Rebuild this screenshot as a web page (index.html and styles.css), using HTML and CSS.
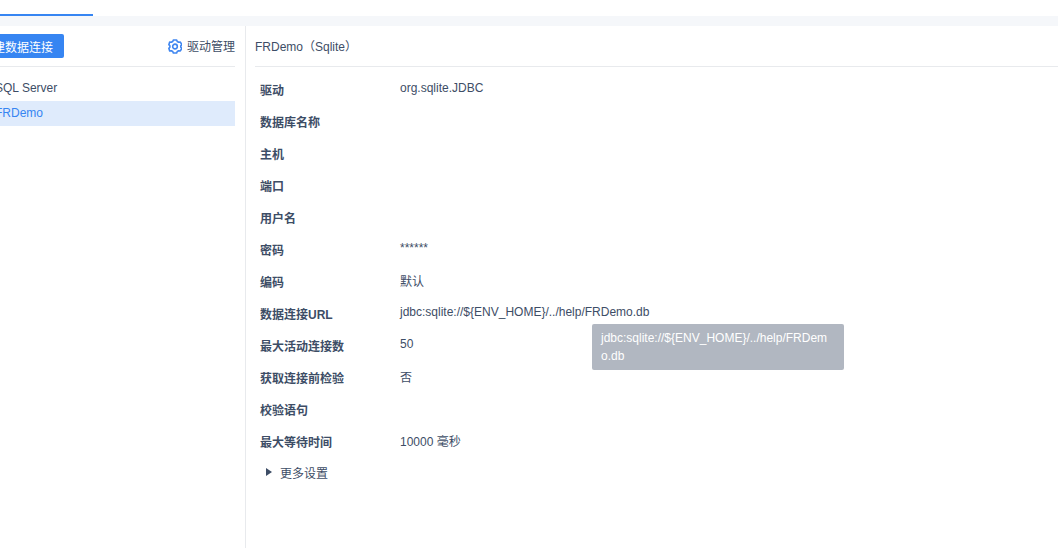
FILE: index.html
```html
<!DOCTYPE html>
<html lang="zh">
<head>
<meta charset="utf-8">
<title>数据连接</title>
<link rel="stylesheet" href="styles.css">
</head>
<body>
<div class="tabs"><div class="tab-active"></div></div>
<div class="main">
  <aside class="side">
    <div class="side-head">
      <button class="btn">新建数据连接</button>
      <span class="driver">
        <svg class="gear" width="14" height="15" viewBox="0 0 15 16" fill="none" stroke="#3f86f0" stroke-width="1.7"><path d="M5.7 1h3.6l.6 1.6 1.6.9 1.7-.3 1.6 2.8-1.1 1.3v1.4l1.1 1.3-1.6 2.8-1.7-.3-1.6.9-.6 1.6H5.7l-.6-1.6-1.6-.9-1.7.3L.9 10l1.1-1.3V7.3L.9 6l.9-2.8 1.7.3 1.6-.9z" stroke-linejoin="round"/><circle cx="7.5" cy="8" r="2.5"/></svg>
        驱动管理
      </span>
    </div>
    <ul class="list">
      <li class="item">SQL Server</li>
      <li class="item active">FRDemo</li>
    </ul>
  </aside>
  <section class="detail">
    <h2 class="title">FRDemo（Sqlite）</h2>
    <div class="rows">
      <div class="row"><span class="label">驱动</span><span class="value">org.sqlite.JDBC</span></div>
      <div class="row"><span class="label">数据库名称</span><span class="value"></span></div>
      <div class="row"><span class="label">主机</span><span class="value"></span></div>
      <div class="row"><span class="label">端口</span><span class="value"></span></div>
      <div class="row"><span class="label">用户名</span><span class="value"></span></div>
      <div class="row"><span class="label">密码</span><span class="value">******</span></div>
      <div class="row"><span class="label">编码</span><span class="value value-cjk">默认</span></div>
      <div class="row"><span class="label">数据连接URL</span><span class="value">jdbc:sqlite://${ENV_HOME}/../help/FRDemo.db</span></div>
      <div class="row"><span class="label">最大活动连接数</span><span class="value">50</span></div>
      <div class="row"><span class="label">获取连接前检验</span><span class="value value-cjk">否</span></div>
      <div class="row"><span class="label">校验语句</span><span class="value"></span></div>
      <div class="row"><span class="label">最大等待时间</span><span class="value value-cjk">10000 毫秒</span></div>
    </div>
    <div class="more"><span class="caret"></span>更多设置</div>
    <div class="tooltip">jdbc:sqlite://${ENV_HOME}/../help/FRDemo.db</div>
  </section>
</div>
</body>
</html>
```
FILE: styles.css
```css
html, body {
  margin: 0;
  padding: 0;
  height: 100%;
  overflow: hidden;
  background: #fff;
}
body {
  font-family: "Liberation Sans", "Noto Sans CJK SC", sans-serif;
  font-size: 12px;
  color: #3d4d66;
}
.tabs {
  height: 16px;
  background: #fff;
}
.tab-active {
  width: 93px;
  height: 16px;
  box-sizing: border-box;
  border-bottom: 2px solid #3685f2;
}
.main {
  display: flex;
  box-sizing: border-box;
  height: 532px;
  border-top: 10px solid #f5f7fa;
}
.side {
  width: 245px;
  flex: none;
  border-right: 1px solid #e8eaed;
  overflow: hidden;
}
.side-head {
  display: flex;
  justify-content: space-between;
  align-items: center;
  margin-left: -30px;
  width: 265px;
  height: 41px;
  box-sizing: border-box;
  border-bottom: 1px solid #e8eaed;
}
.btn {
  width: 94px;
  height: 24px;
  background: #3685f2;
  border: 0;
  border-radius: 2px;
  color: #fff;
  font: inherit;
  padding: 0;
}
.driver {
  display: flex;
  align-items: center;
  gap: 5px;
  margin-bottom: 2px;
  color: #3d4d66;
}
.gear {
  display: block;
  margin-top: 2px;
}
.list {
  list-style: none;
  margin: 9px 0 0 -30px;
  padding: 0;
  width: 265px;
}
.item {
  height: 25px;
  line-height: 25px;
  padding-left: 25px;
}
.item.active {
  background: #dfebfc;
  color: #3685f2;
}
.detail {
  position: relative;
  flex: 1;
  padding: 0 0 0 9px;
}
.title {
  margin: 0;
  height: 41px;
  line-height: 42px;
  font-size: 12px;
  font-weight: normal;
  border-bottom: 1px solid #e8eaed;
  box-sizing: border-box;
}
.rows {
  padding: 8px 0 0 5px;
}
.row {
  display: flex;
  height: 32px;
}
.label {
  width: 140px;
  flex: none;
  font-weight: bold;
  line-height: 32px;
}
.value {
  line-height: 26px;
}
.value-cjk {
  padding-top: 2px;
}
.more {
  display: flex;
  align-items: center;
  padding-left: 11px;
  height: 20px;
  margin-top: 3px;
}
.caret {
  width: 0;
  height: 0;
  border-left: 6px solid #3d4d66;
  border-top: 4px solid transparent;
  border-bottom: 4px solid transparent;
  margin-right: 8px;
}
.tooltip {
  position: absolute;
  left: 346px;
  top: 298px;
  width: 234px;
  padding: 5px 9px;
  background: #b1b7c1;
  border-radius: 2px;
  color: #fff;
  line-height: 18px;
  word-break: break-all;
}
```
